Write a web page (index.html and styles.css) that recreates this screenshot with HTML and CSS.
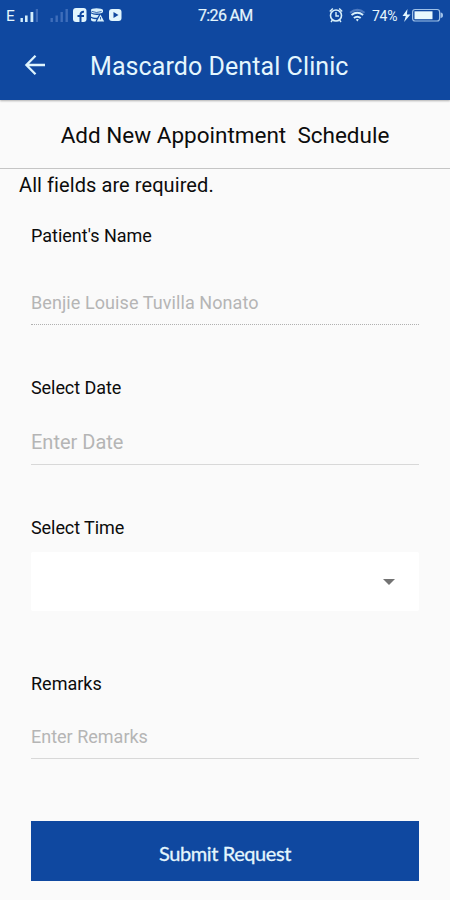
FILE: index.html
```html
<!DOCTYPE html>
<html lang="en">
<head>
<meta charset="utf-8">
<title>Mascardo Dental Clinic</title>
<link rel="stylesheet" href="styles.css">
</head>
<body>
<div class="top">
  <div class="status">
    <div class="status-left">
      <span class="net">E</span>
      <svg width="104" height="16" viewBox="20 7 104 16">
        <g fill="#d3eefc">
          <rect x="20.5" y="18" width="2.4" height="4"/><rect x="25" y="15.5" width="2.6" height="6.5"/><rect x="30.5" y="12" width="2.8" height="10"/>
        </g>
        <g fill="#3e6dba">
          <rect x="35.8" y="9" width="2.2" height="13"/>
          <rect x="50.5" y="18" width="2.4" height="4"/><rect x="55.5" y="15.5" width="2.4" height="6.5"/><rect x="60.5" y="12" width="2.4" height="10"/><rect x="65.5" y="9" width="2.4" height="13"/>
        </g>
        <rect x="73" y="8" width="13.5" height="14" rx="3" fill="#e1f5fd"/>
        <path d="M80.5 22v-7.200q0-3.300 3.500-3M77.500 16h6.500" fill="none" stroke="#0f48a0" stroke-width="2"/>
        <path d="M91 10q0-1.800 5.500-1.800t6.500 1.800v2q-1 1.500-6 1.500t-6-1.500zM91 13.500q3 2 8 1.300l-1.800 2.900q-5 0-6.200-1.300zM91 18q2.500 1.500 5.500 1l-1 2.500q-4 0-4.500-1.500z" fill="#d8f0fb"/>
        <path d="M100.500 14.500l3.700 7h-7.400z" fill="#d8f0fb"/><path d="M100.500 17v2.500M91.500 11.300l5 1.200 5-1" stroke="#0f48a0" stroke-width=".8" fill="none"/>
        <rect x="109" y="9" width="12.500" height="12" rx="3" fill="#e1f5fd"/>
        <path d="M113.500 12l5 3-5 3z" fill="#0f48a0"/>
      </svg>
    </div>
    <span class="clock">7:26 AM</span>
    <div class="status-right">
      <svg width="38" height="18" viewBox="328 6 38 18" fill="none" stroke="#d8f0fb">
        <circle cx="336" cy="15.500" r="5.500" stroke-width="1.600"/>
        <path d="M336 12v4h3M329.800 11.500l3-3M342.200 11.500l-3-3M332.500 20l-1.500 2M339.500 20l1.500 2" stroke-width="1.400"/>
        <path d="M350 12.700q7.300-5.600 14.600 0" stroke="#4b78c0" stroke-width="2"/>
        <path d="M351.500 15q5.800-4.300 11.600 0M353.900 18q3.400-2.600 6.800 0" stroke-width="2"/>
        <path d="M355.800 19.500q1.500-1 3 0l-1.500 2z" fill="#d8f0fb" stroke="none"/>
      </svg>
      <span class="pct">74%</span>
      <svg width="42" height="16" viewBox="402 7 42 16">
        <path d="M407.500 9l-5 7h3.300l-1.700 6 6.400-7.600h-3.600z" fill="#e1f5fd"/>
        <rect x="412.600" y="9.500" width="27" height="11.500" rx="2.500" fill="none" stroke="#9fc1e8" stroke-width="1.200"/>
        <rect x="414.500" y="11.300" width="18" height="7.900" fill="#e8f8fe"/>
        <path d="M440.500 12.500q2.500 0 2.500 2.700t-2.500 2.700z" fill="#9fc1e8"/>
      </svg>
    </div>
  </div>
  <header class="appbar">
    <svg class="back" width="22" height="22" viewBox="24 54 22 22" fill="none" stroke="#def4fd" stroke-width="2.300"><path d="M45 65H27M35.500 55.800L26.400 65l9.100 9.200"/></svg>
    <h1>Mascardo Dental Clinic</h1>
  </header>
</div>
<h2><span>Add New Appointment&nbsp; Schedule</span></h2>
<p class="note">All fields are required.</p>
<form>
  <div class="field name"><label>Patient's Name</label><div class="input dotted">Benjie Louise Tuvilla Nonato</div></div>
  <div class="field date"><label>Select Date</label><div class="input">Enter Date</div></div>
  <div class="field time"><label>Select Time</label><div class="select"><i></i></div></div>
  <div class="field remarks"><label>Remarks</label><div class="input">Enter Remarks</div></div>
  <button type="button">Submit Request</button>
</form>
</body>
</html>
```

FILE: styles.css
```css
* { box-sizing: border-box; }
body { margin: 0; width: 450px; height: 900px; overflow: hidden; background: #fafafa; color: #0c0c0c; font-family: Roboto, sans-serif; }
svg { display: block; flex: none; }
.top { height: 100px; background: #0f48a0; box-shadow: 0 1px 2px rgba(0,0,0,.3); }
.status { height: 32px; display: grid; grid-template-columns: 198px 1fr 122px; color: #e4f6fd; padding-top: 6px; }
.status-left { display: flex; padding: 1px 0 0 6px; }
.net { width: 14px; font-size: 15.500px; line-height: 19px; }
.clock { font-size: 16px; line-height: 20px; white-space: nowrap; letter-spacing: -.65px; -webkit-text-stroke: .2px; }
.status-right { display: flex; align-items: flex-start; }
.pct { width: 30px; margin-left: 6px; font-size: 14px; line-height: 20px; letter-spacing: -.3px; }
.status-right svg:last-child { margin-top: 1px; }
.appbar { display: flex; align-items: center; height: 68px; padding-left: 24px; }
.back { margin-top: -2px; }
h1 { margin: 2px 0 0 44px; font-size: 25px; letter-spacing: .08px; font-weight: 400; line-height: 30px; color: #e4f6fd; white-space: nowrap; }
h2 { margin: 0; height: 68.500px; padding-top: 20px; text-align: center; font-size: 22.500px; line-height: 30px; font-weight: 400; border-bottom: 1px solid #c5c5c5; white-space: nowrap; }
.note { margin: 4.500px 0 0 19px; font-size: 20px; letter-spacing: .08px; line-height: 24px; }
form { padding: 0 31px; }
.field label { display: block; font-size: 18px; line-height: 24px; }
.name { padding-top: 27px; height: 179px; }
.date { height: 140px; }
.date label, .time label { letter-spacing: -.07px; }
.time { height: 156px; }
.remarks { height: 149px; }
.input { margin-top: 29px; height: 46px; font-size: 18px; line-height: 24px; color: #b5b5b5; border-bottom: 1px solid #d8d8d8; }
.name .input { margin-top: 43px; height: 34px; letter-spacing: .08px; }
.dotted { border-bottom: 1px dotted #b0b0b0; }
.date .input { margin-top: 30px; height: 35px; font-size: 20px; }
.remarks .input { margin-top: 29px; height: 34px; }
.select { display: flex; align-items: center; justify-content: flex-end; margin-top: 12px; height: 59px; padding-right: 24px; border-radius: 2px; background: #fff; }
.select i { border: 6px solid transparent; border-top-color: #737373; border-bottom: 0; margin-top: 1px; }
button { display: block; width: 388px; height: 60px; border: 0; padding: 3px 0 0; background: #0f48a0; color: #e4f6fd; font: 20px Lato, sans-serif; letter-spacing: -.4px; -webkit-text-stroke: .3px; }
```
